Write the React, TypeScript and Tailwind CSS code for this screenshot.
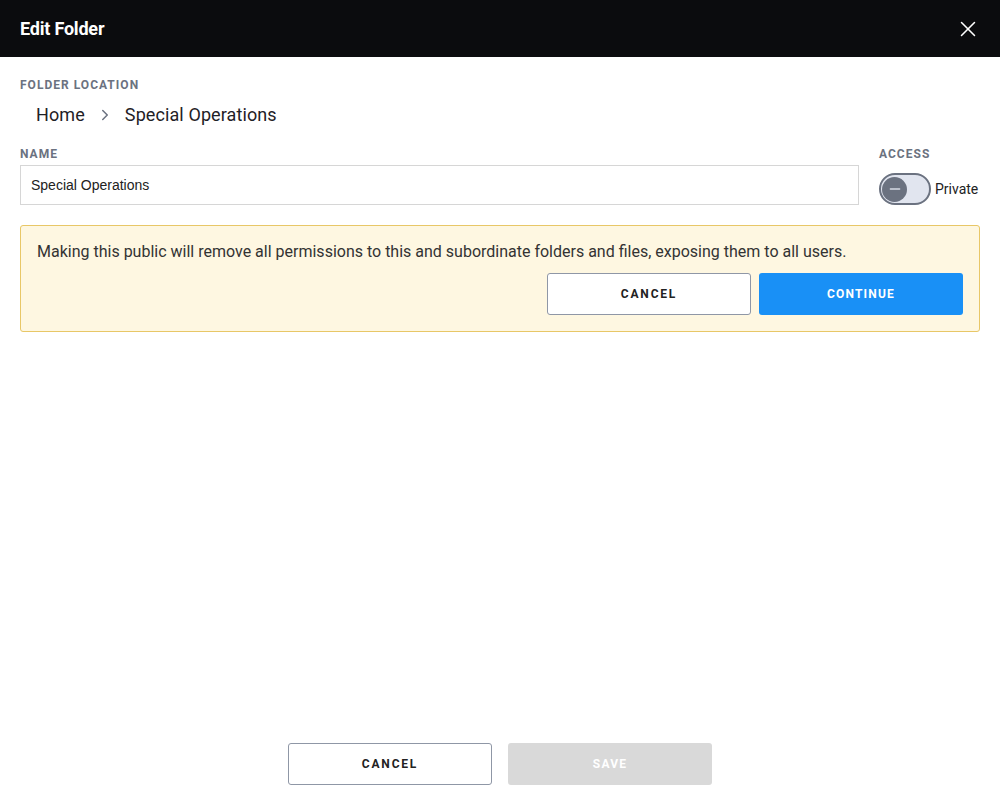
import React from "react";
import { X, ChevronRight, Minus } from "lucide-react";

const App = () => {
  return (
    <div className="flex flex-col h-screen w-full bg-white font-['Roboto',sans-serif]">
      <div className="flex items-center justify-between h-[57px] bg-[#0b0c0e] pl-5 pr-[19px] shrink-0">
        <h1 className="text-white text-[18px] font-bold tracking-[-0.2px]">Edit Folder</h1>
        <X className="text-white w-[26px] h-[26px]" strokeWidth={1.4} />
      </div>

      <div className="flex-1 flex flex-col px-5">
        <div className="mt-[21px] text-[12px] font-bold tracking-[0.085em] text-[#6b7280] leading-[14px]">FOLDER LOCATION</div>
        <div className="flex items-center mt-[11px] ml-4 text-[18px] font-normal text-[#1f2126] leading-[24px] tracking-[0.1px]">
          <span>Home</span>
          <ChevronRight className="w-[18px] h-[18px] text-[#6b7280] mx-[11px]" strokeWidth={2} />
          <span>Special Operations</span>
        </div>

        <div className="flex gap-5 mt-[20px]">
          <div className="flex-1 flex flex-col">
            <label className="text-[12px] font-bold tracking-[0.085em] text-[#6b7280] leading-[14px]">NAME</label>
            <div className="mt-[4px] h-[40px] border border-[#d6d6d6] flex items-center px-[10px] font-['Liberation_Sans',sans-serif] text-[14px] text-[#222]">
              Special Operations
            </div>
          </div>
          <div className="flex flex-col w-[101px]">
            <label className="text-[12px] font-bold tracking-[0.085em] text-[#6b7280] leading-[14px]">ACCESS</label>
            <div className="flex items-center mt-[12px]">
              <div className="w-[52px] h-[32px] rounded-full border-2 border-[#6b7280] bg-[#e1e5ef] flex items-center pl-[1px]">
                <div className="w-[25px] h-[25px] rounded-full bg-[#6b7280] flex items-center justify-center">
                  <Minus className="w-[16px] h-[16px] text-[#d6dae3]" strokeWidth={2} />
                </div>
              </div>
              <span className="ml-[4px] text-[14px] text-[#222]">Private</span>
            </div>
          </div>
        </div>

        <div className="mt-[20px] bg-[#fef7e1] border border-[#e8c767] rounded-[3px] pl-4 pr-4 pt-[15px] pb-4 flex flex-col">
          <p className="text-[16px] text-[#333] leading-[22px]">
            Making this public will remove all permissions to this and subordinate folders and files, exposing them to all users.
          </p>
          <div className="flex justify-end gap-2 mt-[10px]">
            <button className="w-[204px] h-[42px] bg-white border border-[#8f97a6] rounded-[3px] text-[12px] font-bold tracking-[0.15em] text-[#222]">
              CANCEL
            </button>
            <button className="w-[204px] h-[42px] bg-[#1990f6] rounded-[3px] text-[12px] font-bold tracking-[0.1em] text-white">
              CONTINUE
            </button>
          </div>
        </div>
      </div>

      <div className="flex justify-center gap-4 pb-[14px] shrink-0">
        <button className="w-[204px] h-[42px] bg-white border border-[#8f97a6] rounded-[3px] text-[12px] font-bold tracking-[0.15em] text-[#222]">
          CANCEL
        </button>
        <button className="w-[204px] h-[42px] bg-[#d9d9d9] rounded-[3px] text-[12px] font-bold tracking-[0.1em] text-white">
          SAVE
        </button>
      </div>
    </div>
  );
};

export default App;
